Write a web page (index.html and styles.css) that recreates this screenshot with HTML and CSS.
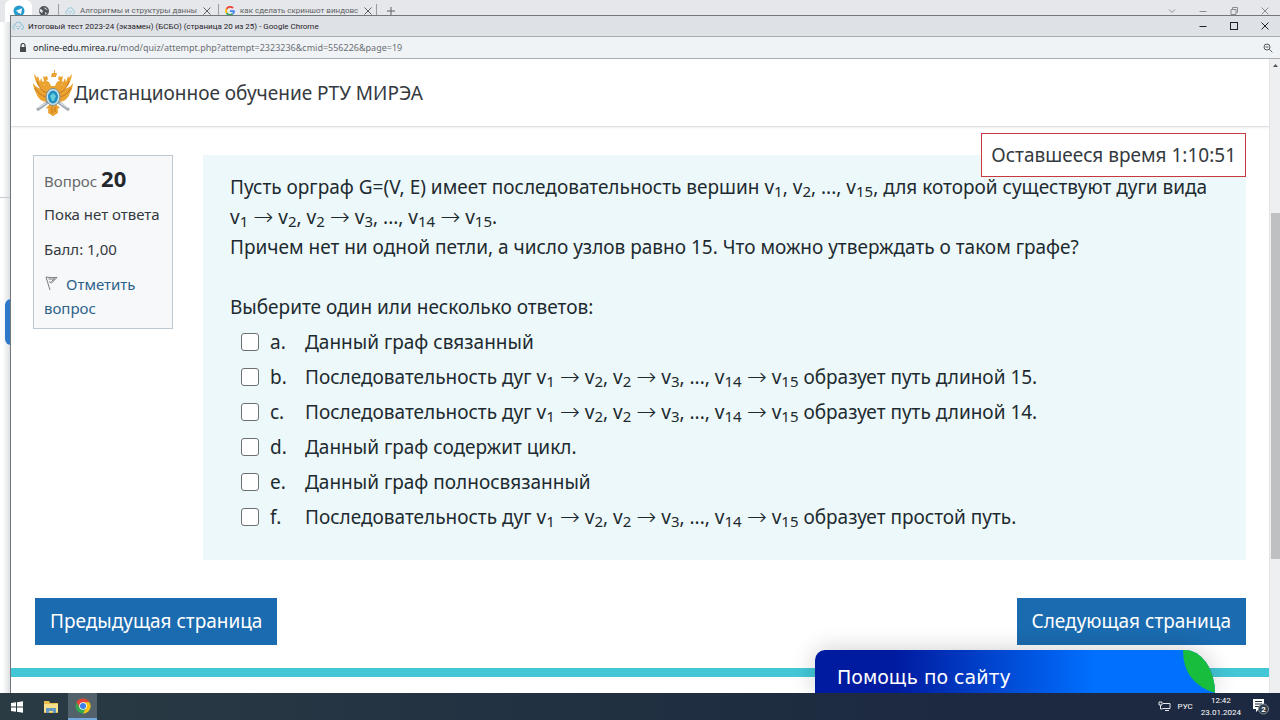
FILE: index.html
```html
<!DOCTYPE html>
<html lang="ru">
<head>
<meta charset="utf-8">
<meta name="viewport" content="width=device-width, initial-scale=1">
<title>Итоговый тест 2023-24 (экзамен) (БСБО) (страница 20 из 25)</title>
<link rel="stylesheet" href="styles.css">
</head>
<body>
<svg class="defs" aria-hidden="true">
  <symbol id="cloud" viewBox="0 0 12 10"><path d="M3 8.5Q.5 8 1 5.500Q1.500 4 3 4Q3.500 1 6.500 1Q9 1 9.500 4Q11.500 4 11.500 6Q11.500 8.500 9 8.500M3.500 5.500h1.500M6.500 5.500h2M5 7.500h2.500" fill="none" stroke="#83c3dc" stroke-width="1"/></symbol>
  <symbol id="close" viewBox="0 0 10 10"><path d="M1.500 1.500l7 7m0-7l-7 7" fill="none" stroke="currentColor"/></symbol>
  <symbol id="minus" viewBox="0 0 10 10"><path d="M1.500 5.500h7" fill="none" stroke="currentColor"/></symbol>
</svg>
<div class="desktop">
  <div class="browser">
    <div class="tabs">
      <div class="tab-active"><svg viewBox="0 0 12 12"><circle cx="6" cy="6" r="5.500" fill="#259bd0"/><path d="M2.500 6l6.500-2.800-1 6-2.200-1.700-.8 1-.3-2z" fill="#fff"/></svg></div>
      <svg class="globe" viewBox="0 0 12 12"><circle cx="6" cy="6" r="5" fill="#50565b"/><path d="M2 4q2 0 3 2l-1 2q-2-1-2.500-2M6.500 2q-.5 2 1 2.300l2.500 1M7 7l2 1-1.500 2z" fill="#dfe2e5"/></svg>
      <div class="tab tab-course"><svg><use href="#cloud"/></svg><span>Алгоритмы и структуры данны</span><button aria-label="Закрыть вкладку"><svg><use href="#close"/></svg></button></div>
      <div class="tab tab-search"><svg viewBox="0 0 10 10"><g fill="none" stroke-width="1.800"><path d="M8 2A4 4 0 0 0 1.600 3" stroke="#ea4335"/><path d="M1.600 3A4 4 0 0 0 1.600 7" stroke="#fbbc05"/><path d="M1.600 7A4 4 0 0 0 7.500 8" stroke="#34a853"/><path d="M7.500 8Q9 7 9 5.200H5" stroke="#4285f4"/></g></svg><span>как сделать скриншот виндовс</span><button aria-label="Закрыть вкладку"><svg><use href="#close"/></svg></button></div>
      <button class="new-tab" aria-label="Новая вкладка"><svg viewBox="0 0 10 10"><path d="M5 1v8M1 5h8" fill="none" stroke="currentColor"/></svg></button>
      <div class="controls">
        <svg viewBox="0 0 10 10"><path d="M2 3.500l3 3 3-3" fill="none" stroke="currentColor"/></svg>
        <svg><use href="#minus"/></svg>
        <svg viewBox="0 0 10 10"><path d="M2 3.500h5v5H2zM3.500 3V1.500h5v5H7.500" fill="none" stroke="currentColor"/></svg>
        <svg><use href="#close"/></svg>
      </div>
    </div>
    <div class="browser-side"></div>
  </div>
  <div class="popup">
    <div class="titlebar">
      <svg class="favicon"><use href="#cloud"/></svg>
      <span class="caption">Итоговый тест 2023-24 (экзамен) (БСБО) (страница 20 из 25) - Google Chrome</span>
      <div class="controls">
        <button aria-label="Свернуть"><svg><use href="#minus"/></svg></button>
        <button aria-label="Развернуть"><svg viewBox="0 0 10 10"><rect x="1.500" y="1.500" width="7" height="7" fill="none" stroke="currentColor"/></svg></button>
        <button aria-label="Закрыть"><svg><use href="#close"/></svg></button>
      </div>
    </div>
    <div class="address">
      <svg class="lock" viewBox="0 0 8 10"><path d="M2 4V2.500a2 2 0 0 1 4 0V4" fill="none" stroke="#454b50" stroke-width="1.200"/><rect x="1" y="4" width="6" height="5" fill="#454b50"/></svg>
      <span class="url"><b>online-edu.mirea.ru</b>/mod/quiz/attempt.php?attempt=2323236&amp;cmid=556226&amp;page=19</span>
      <svg class="magnify" viewBox="0 0 10 10"><circle cx="4" cy="4" r="3" fill="none" stroke="#555b60"/><path d="M2.500 4h3M6.300 6.300l3 3" stroke="#555b60"/></svg>
    </div>
    <div class="viewport">
      <div class="page">
        <header class="site-header">
          <svg class="emblem" viewBox="0 0 42 48">
            <g fill="#eba22f">
              <path d="M20 4h2V1h1v3h2l-1 4h-5z"/>
              <path d="M11 7l2 1 2-1 1 3-2 2h-2zM27 7l2 1 2-1-1 5h-2l-2-2z"/>
              <path d="M12 12q5-1 7 5h4q2-6 7-5l4 4-4-1q-3 1-3 5l-2 4H17l-2-4q0-4-3-5l-4 1z"/>
              <path d="M16 23Q4 20 2 5q2 2 3 4l1-2 2 6 1-4 3 7 2-2 2 7zM26 23Q38 20 40 5q-2 2-3 4l-1-2-2 6-1-4-3 7-2-2-2 7z"/>
              <path d="M1 14q1 14 14 16l1-9Q4 20 1 14zM41 14q-1 14-14 16l-1-9Q38 20 41 14zM4 24q3 9 12 9v-6Q8 27 4 24zM38 24q-3 9-12 9v-6Q34 27 38 24z"/>
              <path d="M18 34h6l2 8-2 2-3 3-3-3-2-2z"/>
              <path d="M14 39l4-4h6l4 4-3 1 1 4-5 3-5-3 1-4z"/>
            </g>
            <g fill="none" stroke="#bd6c22" stroke-width=".8"><path d="M5 12q3 10 10 12M3 19q4 7 11 9M37 12q-3 10-10 12M39 19q-4 7-11 9M20 38v6M23 38v5"/></g>
            <path d="M5 41L16 33M37 41L26 33" stroke="#a2abb2" stroke-width="3"/><path d="M6 39l8-5M36 39l-8-5" stroke="#e7ecee"/>
            <ellipse cx="21" cy="28" rx="7" ry="8.500" fill="#c9e0e5" stroke="#788f98"/>
            <ellipse cx="21" cy="28" rx="5" ry="6.500" fill="#228fc5"/><path d="M18 27l3-3 3 3-2 5h-2z" fill="#67cdda"/>
          </svg>
          <span>Дистанционное обучение РТУ МИРЭА</span>
        </header>
        <div class="timer" role="timer">Оставшееся время 1:10:51</div>
        <main class="attempt">
          <aside class="info">
            <h3>Вопрос <strong>20</strong></h3>
            <p class="state">Пока нет ответа</p>
            <p class="grade">Балл: 1,00</p>
            <a href="#"><svg viewBox="0 0 16 16"><path d="M2 2l4 13M2 2q5 1 11 0.500L7.500 8 5 6.500M4.500 4l6 0-3 2.500" fill="none" stroke="#777c80"/></svg>Отметить вопрос</a>
          </aside>
          <section class="question">
            <p>Пусть орграф G=(V, E) имеет последовательность вершин v<sub>1</sub>, v<sub>2</sub>, ..., v<sub>15</sub>, для которой существуют дуги вида<br>v<sub>1</sub> <i>→</i> v<sub>2</sub>, v<sub>2</sub> <i>→</i> v<sub>3</sub>, ..., v<sub>14</sub> <i>→</i> v<sub>15</sub>.</p>
            <p>Причем нет ни одной петли, а число узлов равно 15. Что можно утверждать о таком графе?</p>
            <fieldset>
              <legend>Выберите один или несколько ответов:</legend>
              <label><input type="checkbox"><span>a.</span><span>Данный граф связанный</span></label>
              <label><input type="checkbox"><span>b.</span><span>Последовательность дуг v<sub>1</sub> <i>→</i> v<sub>2</sub>, v<sub>2</sub> <i>→</i> v<sub>3</sub>, ..., v<sub>14</sub> <i>→</i> v<sub>15</sub> образует путь длиной 15.</span></label>
              <label><input type="checkbox"><span>c.</span><span>Последовательность дуг v<sub>1</sub> <i>→</i> v<sub>2</sub>, v<sub>2</sub> <i>→</i> v<sub>3</sub>, ..., v<sub>14</sub> <i>→</i> v<sub>15</sub> образует путь длиной 14.</span></label>
              <label><input type="checkbox"><span>d.</span><span>Данный граф содержит цикл.</span></label>
              <label><input type="checkbox"><span>e.</span><span>Данный граф полносвязанный</span></label>
              <label><input type="checkbox"><span>f.</span><span>Последовательность дуг v<sub>1</sub> <i>→</i> v<sub>2</sub>, v<sub>2</sub> <i>→</i> v<sub>3</sub>, ..., v<sub>14</sub> <i>→</i> v<sub>15</sub> образует простой путь.</span></label>
            </fieldset>
          </section>
        </main>
        <nav class="pager">
          <button>Предыдущая страница</button>
          <button>Следующая страница</button>
        </nav>
        <footer class="site-footer"></footer>
        <button class="help">Помощь по сайту<svg viewBox="0 0 32 43"><path d="M0 0H32V43Q0 33 0 0z" fill="#19bd3e"/></svg></button>
      </div>
      <div class="scrollbar"><svg viewBox="0 0 11 12"><path d="M3 8l2.500-3L8 8z" fill="#555"/></svg><div class="thumb"></div></div>
    </div>
  </div>
</div>
<div class="taskbar">
  <button aria-label="Пуск"><svg viewBox="0 0 12 12"><path d="M0 2l5-.7v4.200H0zM6 1.200L12 .3v5.200H6zM0 6.500h5v4.200L0 10zM6 6.500h6v5.200l-6-.9z" fill="#fff"/></svg></button>
  <button aria-label="Проводник"><svg class="wide" viewBox="0 0 16 14"><path d="M1 1h5l1 2h8v10H1z" fill="#e8bd4c"/><path d="M1 4h14v8H1z" fill="#f8df88"/><path d="M3 13V8h10v5h-3v-2H6v2z" fill="#6399c2"/></svg></button>
  <button class="running" aria-label="Google Chrome"><svg class="wide" viewBox="0 0 16 16"><circle cx="8" cy="8" r="7.500" fill="#33a852"/><path d="M1.500 4.250A7.500 7.500 0 0 1 14.500 4.250H8L4.750 9.900z" fill="#e94335"/><path d="M14.500 4.250A7.500 7.500 0 0 1 8 15.500L11.250 9.900 8 4.250z" fill="#fbc116"/><circle cx="8" cy="8" r="3.800" fill="#fff"/><circle cx="8" cy="8" r="3" fill="#3b7de8"/></svg></button>
  <div class="tray">
    <svg class="network" viewBox="0 0 13 11"><path d="M5 2.500h7v5H4.500M7 9.500h4M2.500 4v4h2M1 1h3v3H1z" fill="none" stroke="#e7e9eb"/></svg>
    <span>РУС</span>
    <time datetime="2024-01-23T12:42">12:42<br>23.01.2024</time>
    <svg class="notice" viewBox="0 0 18 17"><path d="M1 1h11v10H7l-3 3v-3H1z" fill="#fff"/><path d="M3 3.500h7M3 6h7M3 8.500h4" stroke="#1f2b3e"/><circle cx="11.500" cy="11" r="5" fill="#303b48" stroke="#87909a"/><text x="11.500" y="14" text-anchor="middle">2</text></svg>
  </div>
</div>
</body>
</html>
```
FILE: styles.css
```css
* { box-sizing: border-box; }
body {
  margin: 0;
  height: 100vh;
  display: flex;
  flex-direction: column;
  overflow: hidden;
  background: #fff;
  color: #1d2b30;
  font-family: "Noto Sans", "Open Sans", sans-serif;
}
button { font: inherit; border: 0; padding: 0; background: none; color: inherit; }
svg { display: block; flex: none; }
p, h3 { margin: 0; font-weight: 400; }
.defs { display: none; }
.desktop { flex: 1; min-height: 0; position: relative; }

/* Window behind the popup */
.browser { height: 100%; display: flex; flex-direction: column; }
.tabs { display: flex; align-items: center; height: 22px; background: #e6e7ea; color: #5c6165; font-family: Roboto, sans-serif; font-size: 8px; padding-left: 5px; }
.tab-active { width: 27px; height: 22px; background: #fff; border-radius: 6px 6px 0 0; display: flex; justify-content: center; padding-top: 5px; }
.tab-active svg, .globe { width: 12px; height: 12px; }
.globe { margin: 0 8px 0 6px; }
.tab { display: flex; align-items: center; gap: 5px; height: 14px; border-left: 1px solid #9a9da0; padding: 0 6px; }
.tab svg { width: 10px; height: 10px; }
.tab span { flex: 1; white-space: nowrap; line-height: 14px; }
.tab-course { width: 160px; }
.tab-search { width: 159px; border-right: 1px solid #9a9da0; }
.new-tab { margin-left: 9px; }
.new-tab svg { width: 10px; height: 10px; }
.controls { display: flex; align-items: center; gap: 21px; margin-left: auto; padding-right: 10px; }
.controls svg { width: 10px; height: 10px; }
.tabs .controls { color: #8b8e91; }
.browser-side { flex: 1; width: 11px; background: linear-gradient(90deg, #fff 20%, #d9dcdf); }
.browser-side::before { content: ""; display: block; height: 175px; border-bottom: 1px solid #c7cacd; }
.browser-side::after { content: ""; display: block; height: 46px; margin: 101px 0 0 5px; background: #2f79ca; border-radius: 6px 0 0 6px; }

/* Popup window */
.popup { position: absolute; inset: 15px 0 0 10px; display: flex; flex-direction: column; border: solid #72777b; border-width: 1px 0 0 1px; background: #fff; }
.titlebar { display: flex; align-items: center; height: 21px; background: #dee1e6; border-bottom: 1px solid #a9adb2; font-family: Roboto, sans-serif; font-size: 8px; color: #1f2327; }
.favicon { width: 12px; height: 10px; margin: 0 4px 0 1px; }
.address { display: flex; align-items: center; height: 22px; background: #f0f3f6; border-bottom: 1px solid #a9adb2; font-size: 9px; padding: 0 7px 0 8px; color: #6b7074; }
.address b { color: #24292d; font-weight: 400; }
.lock { width: 8px; height: 10px; margin-right: 6px; }
.magnify { width: 10px; height: 10px; margin-left: auto; }
.viewport { flex: 1; min-height: 0; display: flex; }
.page { flex: 1; min-width: 0; position: relative; overflow: hidden; }
.scrollbar { width: 11px; background: #eeeff1; border-left: 1px solid #e2e3e6; }
.scrollbar svg { width: 11px; height: 12px; }
.thumb { margin: 142px 0 0 1px; width: 9px; height: 346px; background: #bfc0c2; }

/* Quiz page */
.site-header { display: flex; align-items: center; height: 68px; padding-left: 21px; border-bottom: 1px solid #dfe1e3; box-shadow: 0 1px 2px #eceeef; font-size: 19px; color: #343a40; }
.emblem { width: 42px; height: 48px; }
.timer { position: absolute; top: 74px; right: 23px; padding: 0 9px; border: 1px solid #c8383f; background: #fff; color: #343a40; font-size: 19px; line-height: 42px; }
.attempt { display: flex; align-items: flex-start; gap: 30px; padding: 28px 23px 0 22px; }
.info { flex: none; width: 140px; padding: 8px 10px; border: 1px solid #bcc9d2; background: #f7f8fa; font-size: 15px; line-height: 24px; color: #343a40; }
.info h3 { font-size: 15px; line-height: 28px; color: #65696c; }
.info strong { font-size: 22px; color: #24282c; }
.state { margin: 7px 0 11px; white-space: nowrap; }
.info a { display: block; margin: 11px 0 0; color: #2c6289; text-decoration: none; }
.info a svg { display: inline-block; width: 16px; height: 16px; margin-right: 6px; vertical-align: -1px; }
.question { flex: 1; min-width: 0; padding: 17px 27px 26px; background: #edf8fa; font-size: 19px; line-height: 30px; }
sub { font-size: 15px; line-height: 0; vertical-align: -3px; }
i { font-family: "DejaVu Sans", sans-serif; font-weight: 200; font-size: 24px; font-style: normal; line-height: 0; vertical-align: -1px; }
fieldset { border: 0; padding: 0; margin: 30px 0 0; min-width: 0; }
legend { padding: 0; margin-bottom: 2px; }
label { display: grid; grid-template-columns: 29px 35px 1fr; align-items: center; height: 35px; padding-left: 11px; }
input { appearance: none; width: 18px; height: 18px; margin: 0; border: 1px solid #6b7074; border-radius: 3px; background: #fff; }
.pager { display: flex; justify-content: space-between; padding: 38px 23px 23px 24px; }
.pager button { padding: 0 15px; line-height: 47px; font-size: 19px; color: #fff; background: #1a6bb0; }
.site-footer { height: 9px; background: #43c7d7; }
.help { position: absolute; right: 54px; bottom: 0; width: 400px; height: 43px; padding-left: 22px; border-radius: 10px 30px 0 0 / 10px 43px 0 0; background: linear-gradient(90deg, #001ba0 20%, #0070ff 70%); box-shadow: 0 0 24px #0003; color: #fff; font-family: "DejaVu Sans", sans-serif; font-size: 19px; text-align: left; line-height: 54px; display: flex; justify-content: space-between; overflow: hidden; }
.help svg { width: 32px; height: 43px; }

/* Taskbar */
.taskbar { display: flex; align-items: center; height: 27px; background: linear-gradient(90deg, #2a3b44, #1c2940 75%); color: #fff; }
.taskbar button { width: 34px; height: 27px; display: flex; align-items: center; justify-content: center; }
.taskbar button svg { width: 12px; height: 12px; }
.taskbar button .wide { width: 16px; height: 16px; }
.taskbar .running { width: 29px; background: #53616a; border-bottom: 2px solid #70a7dc; }
.tray { display: flex; align-items: center; margin-left: auto; padding-right: 10px; font-family: Roboto, sans-serif; font-size: 8px; }
.network { width: 13px; height: 11px; margin-right: 7px; }
.tray time { margin: 0 11px 0 8px; text-align: center; line-height: 12px; }
.notice { width: 18px; height: 17px; }
.notice text { font-size: 8px; fill: #fff; font-weight: 700; }
```
